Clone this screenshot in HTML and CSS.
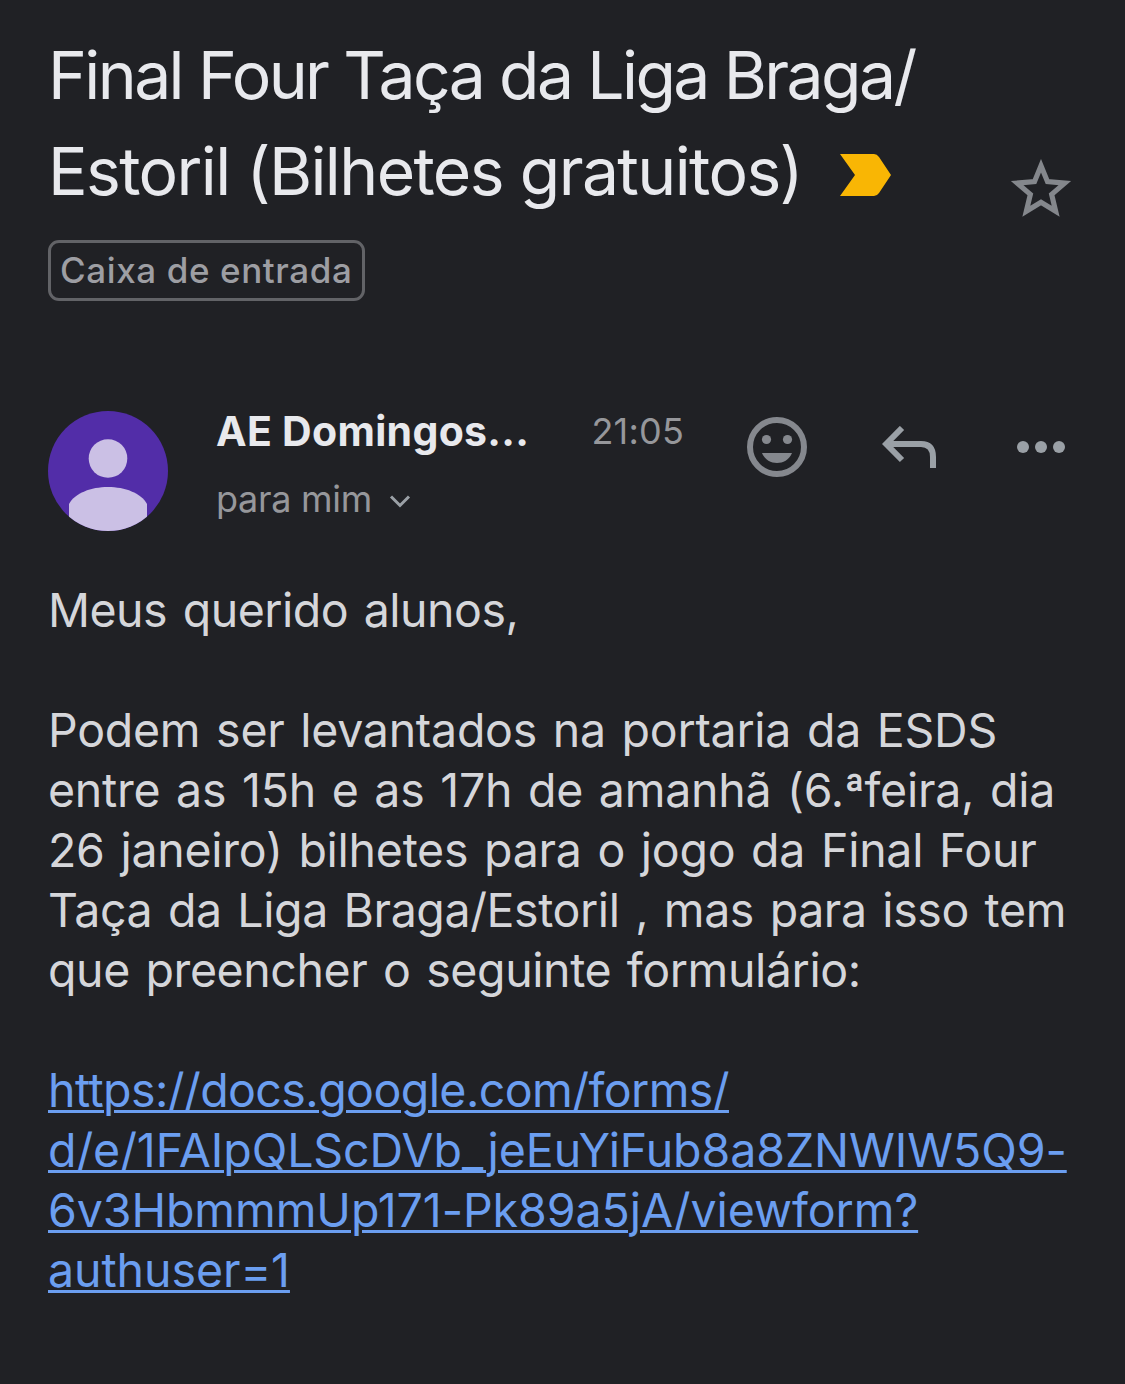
FILE: index.html
```html
<!DOCTYPE html>
<html lang="pt">
<head>
    <meta charset="UTF-8">
    <meta name="viewport" content="width=device-width, initial-scale=1.0">
    <title>Final Four Taça da Liga Braga/Estoril</title>
    <link rel="stylesheet" href="styles.css">
</head>
<body>
    <header class="subject">
        <div class="subject-text">
            <h1><span class="title-1">Final Four Taça da Liga Braga/</span><br><span class="title-2">Estoril (Bilhetes gratuitos)</span><svg class="important" viewBox="0 0 52 42"><path d="M0 0H34Q37 0 39 3L51 21L39 39Q37 42 34 42H0L15 21Z" fill="#f9b604"/></svg></h1>
            <span class="label">Caixa de entrada</span>
        </div>
        <svg class="star" viewBox="0 0 60 58"><path d="M30 6.500L36.3 21.900L53 23.300L40.3 34.200L44.200 50.500L30 41.800L15.800 50.500L19.700 34.200L7 23.300L23.700 21.900Z" fill="none" stroke="#84878c" stroke-width="5"/></svg>
    </header>

    <section class="sender">
        <svg class="avatar" viewBox="0 0 120 120">
            <clipPath id="round"><circle cx="60" cy="60" r="60"/></clipPath>
            <g clip-path="url(#round)">
                <rect width="120" height="120" fill="#522da8"/>
                <circle cx="60" cy="47.5" r="19.3" fill="#cbc0e5"/>
                <path d="M21 120V93C27 82 43 76 60 76S93 82 99 93V120Z" fill="#cbc0e5"/>
            </g>
        </svg>
        <div class="info">
            <div class="from">
                <span class="name">AE Domingos...</span>
                <span class="time">21:05</span>
            </div>
            <div class="to">
                <span class="to-text">para mim</span>
                <svg class="chevron" viewBox="0 0 22 14"><path d="M2 2.500L11 11.500L20 2.500" fill="none" stroke="#9aa0a6" stroke-width="3"/></svg>
            </div>
        </div>
        <div class="actions">
            <svg class="smile" viewBox="0 0 60 60">
                <circle cx="30" cy="30" r="27" fill="none" stroke="#85888e" stroke-width="6"/>
                <circle cx="19.5" cy="22.5" r="4.6" fill="#85888e"/>
                <circle cx="40.5" cy="22.5" r="4.6" fill="#85888e"/>
                <path d="M15 36H45C42 43 36 46 30 46S18 43 15 36Z" fill="#85888e"/>
            </svg>
            <svg class="reply" viewBox="0 0 54 42"><path d="M20 2L4.200 18L20 34M4.200 18H39Q51 18 51 31V42" fill="none" stroke="#9aa0a6" stroke-width="6"/></svg>
            <svg class="more" viewBox="0 0 48 12" fill="#9aa0a6"><circle cx="6" cy="6" r="6"/><circle cx="24" cy="6" r="6"/><circle cx="42" cy="6" r="6"/></svg>
        </div>
    </section>

    <main class="message">
        <p class="greeting">Meus querido alunos,</p>
        <p>Podem ser levantados na portaria da ESDS<br>entre as 15h e as 17h de amanhã (6.ªfeira, dia<br>26 janeiro) bilhetes para o jogo da Final Four<br><span class="tight">Taça da Liga Braga/Estoril , mas para isso tem<br>que preencher o seguinte formulário:</span></p>
        <p class="url"><a class="link" href="#"><span class="host">https://docs.google.com/forms/</span><br>d/e/1FAIpQLScDVb_jeEuYiFub8a8ZNWIW5Q9-<br>6v3HbmmmUp171-Pk89a5jA/viewform?<br>authuser=1</a></p>
    </main>
</body>
</html>
```
FILE: styles.css
```css
* {
    box-sizing: border-box;
}

body {
    margin: 0;
    padding: 27px 48px 0;
    min-height: 1384px;
    background: #202125;
    color: #d5d6da;
    font-family: Inter, "Liberation Sans", sans-serif;
    white-space: nowrap;
}

svg {
    display: block;
    flex-shrink: 0;
}

.subject {
    display: flex;
    justify-content: space-between;
    height: 384px;
}

h1 {
    margin: 0 0 21px;
    color: #e8e9ed;
    font-size: 66px;
    font-weight: 400;
    line-height: 96px;
}

.title-1 {
    letter-spacing: -2.6px;
}

.title-2 {
    letter-spacing: -1.62px;
}

.important {
    display: inline-block;
    width: 52px;
    height: 42px;
    margin-left: 38px;
    vertical-align: -1px;
}

.label {
    display: block;
    width: 317px;
    height: 61px;
    padding-left: 9px;
    border: 3px solid #626367;
    border-radius: 11px;
    color: #9d9ea3;
    font-size: 35px;
    font-weight: 500;
    line-height: 55px;
    letter-spacing: 0.6px;
}

.star {
    width: 62px;
    height: 60px;
    margin: 132px 5px 0 0;
}

.sender {
    display: flex;
    height: 169px;
}

.avatar {
    width: 120px;
    height: 120px;
}

.info {
    width: 468px;
    margin-left: 48px;
}

.from {
    display: flex;
    justify-content: space-between;
    height: 60px;
    line-height: 40px;
}

.name {
    color: #e8e9ed;
    font-size: 41px;
    font-weight: 700;
    letter-spacing: 0.3px;
}

.time {
    color: #96979b;
    font-size: 36px;
    letter-spacing: 0.2px;
}

.to {
    display: flex;
    align-items: center;
    gap: 17px;
    color: #96979b;
    font-size: 36px;
    line-height: 57px;
}

.to-text {
    letter-spacing: -0.3px;
}

.chevron {
    width: 22px;
    height: 14px;
    margin-top: 3px;
}

.actions {
    display: flex;
    flex: 1;
    align-items: center;
    height: 72px;
    margin-left: 63px;
}

.smile {
    width: 60px;
    height: 60px;
}

.reply {
    width: 54px;
    height: 42px;
    margin-left: 75px;
}

.more {
    width: 48px;
    height: 12px;
    margin-left: 81px;
}

.message {
    font-size: 46.5px;
    line-height: 60px;
    letter-spacing: -0.27px;
    word-spacing: 3px;
}

.message p {
    margin: 0 0 60px;
}

.message .greeting {
    letter-spacing: -0.5px;
}

.tight {
    letter-spacing: -0.41px;
}

.message .url {
    letter-spacing: -0.07px;
}

.host {
    letter-spacing: -0.57px;
}

.link {
    color: #6b9ef0;
    text-decoration: underline;
    text-decoration-thickness: 3px;
    text-underline-offset: 3px;
}
```
